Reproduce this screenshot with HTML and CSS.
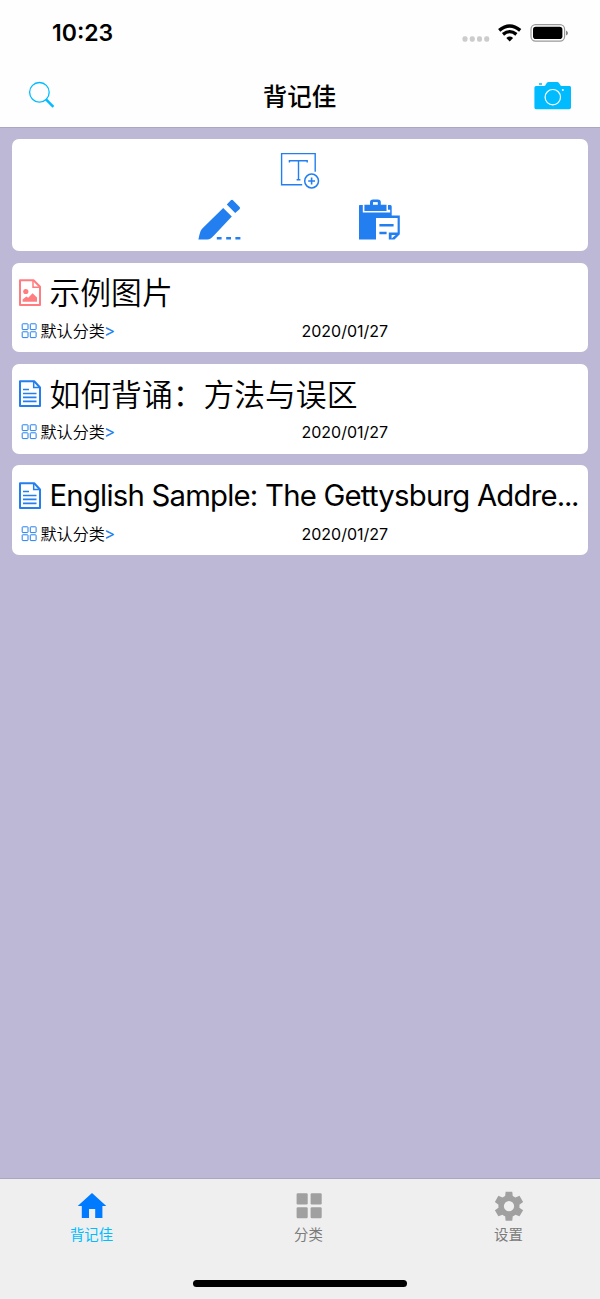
FILE: index.html
```html
<!DOCTYPE html>
<html lang="zh-CN">
<head>
<meta charset="utf-8">
<title>背记佳</title>
<link rel="stylesheet" href="styles.css">
</head>
<body>
<svg width="0" height="0" class="defs">
  <symbol id="grid" viewBox="0 0 16 16"><g fill="none" stroke="#237ff0" stroke-width="1"><rect x="1.2" y=".8" width="5.8" height="5.8" rx=".6"/><rect x="9.3" y=".8" width="5.8" height="5.8" rx=".6"/><rect x="1.2" y="8.8" width="5.8" height="5.8" rx=".6"/><rect x="9.3" y="8.8" width="5.8" height="5.8" rx=".6"/></g></symbol>
  <symbol id="doc" viewBox="0 0 24 28"><path d="M2 1.2H16.2L22 7.5V26H2Z" fill="none" stroke="#237ff0" stroke-width="2" stroke-linejoin="round"/><path d="M15.7 1.5V7.5H21.8" fill="none" stroke="#237ff0" stroke-width="1.5"/><path d="M5 9.5H11M5 13.5H18.5M5 17.4H18.5M5 21.4H18.5" stroke="#237ff0" stroke-width="1.7"/></symbol>
</svg>
<div class="app">
  <header class="header">
    <div class="status">
      <span class="time">10:23</span>
      <svg class="status-icons" width="112" height="24" viewBox="0 0 112 24">
        <g fill="#ccc"><rect x="4.5" y="15.3" width="5" height="5.5" rx="2"/><rect x="11.8" y="15.3" width="5" height="5.5" rx="2"/><rect x="19" y="15.3" width="5" height="5.5" rx="2"/><rect x="26.2" y="15.3" width="5" height="5.5" rx="2"/></g>
        <g fill="none" stroke="#000"><path d="M41.2 9.4Q51.7 .7 62.2 9.4" stroke-width="3.4"/><path d="M45 13.4Q51.7 7.9 58.4 13.4" stroke-width="3.3"/></g>
        <path d="M48.3 16.9Q51.7 14.1 55.1 16.9L51.7 20.6Z"/>
        <rect x="73" y="3.6" width="33.6" height="16.6" rx="4.6" fill="none" stroke="#999" stroke-width="1.2"/>
        <rect x="75" y="5.8" width="29.4" height="12.3" rx="2.8"/>
        <path d="M108 9.4Q112 12 108 14.6Z" fill="#888"/>
      </svg>
    </div>
    <nav class="navbar">
      <svg width="30" height="30" viewBox="0 0 30 30"><circle cx="12.4" cy="12.3" r="9.8" fill="none" stroke="#00bcff" stroke-width="1.3"/><path d="M19 19.3L26.4 26.8" stroke="#00bcff" stroke-width="2.5"/></svg>
      <h1>背记佳</h1>
      <svg width="38" height="30" viewBox="0 0 38 30"><path d="M2 6H10Q11.4 6 12.2 3.8Q13 2 14.5 2H23.3Q24.8 2 25.5 3.8Q26.4 6 27.8 6H35.7Q37 6 37 7.5V27.5Q37 29.3 35.2 29.3H2Q.4 29.3.4 27.5V7.7Q.4 6 2 6ZM5 3.2H8V4.8H5Z" fill="#00bcff"/><circle cx="18.8" cy="17.2" r="7.7" fill="none" stroke="#fff" stroke-width="1.2"/><circle cx="28.8" cy="9.9" r="1" fill="#fff"/></svg>
    </nav>
  </header>
  <main class="content">
    <section class="create card">
      <svg width="42" height="40" viewBox="0 0 42 40"><g fill="none" stroke="#237ff0" stroke-width="1.4"><path d="M23.2 33.8H2.6V2.6H36.2V20.8"/><path d="M10.4 11.6V9.7H28.2V11.6M19.5 9.7V28.5M17.6 28.8H21.4"/><circle cx="32.6" cy="30" r="6.9" stroke-width="1.5"/><path d="M29.2 30H36M32.6 26.6V33.4" stroke-width="1.6"/></g></svg>
      <div class="create-row">
        <svg width="44" height="42" viewBox="0 0 44 42"><path d="M25.2 8.1L33.8 16.6L16.2 35.2Q12.6 39.4 9.4 39.4H.4Q1.5 34 2.6 31Q3.4 29 5.3 27.4ZM28.8 4.4L32.6.6Q34 -1 35.2.4L41.6 7Q42.6 8 41.5 9.2L37.2 13Z" fill="#237ff0"/><path d="M18.8 38.2H23.6M28.2 38.2H33M37.4 38.2H42.4" stroke="#237ff0" stroke-width="2.6"/></svg>
        <svg width="42" height="42" viewBox="0 0 42 42"><path d="M0 5.4Q0 5 .6 5H3.8V12.6H31.2V9.8H29V5H31.4Q32.7 5 32.7 6.5V15.4H40.8V34.2L35.5 39.4H0Z" fill="#237ff0"/><path d="M5.4 4.8H11V2.2Q11 -.6 14 -.6H18.8Q21.8 -.6 21.8 2.2V4.8H27.5V11H5.4Z" fill="#237ff0"/><path d="M14 2.1H18.8V4.8H14Z" fill="#fff"/><path d="M17 18H38.6V32.6H29.8V40H17Z" fill="#fff"/><path d="M20.4 25.2H34.6M20.4 33H27.6" stroke="#237ff0" stroke-width="2.6"/><path d="M32.6 35H36.6L32.6 38.4Z" fill="#fff"/></svg>
      </div>
    </section>
    <article class="note card">
      <div class="title-row"><svg width="24" height="28" viewBox="0 0 24 28"><path d="M2 1.2H15.5L22 7.8V26H2Z" fill="none" stroke="#ff7d80" stroke-width="2" stroke-linejoin="round"/><path d="M15 1.5V8.2H21.8" fill="none" stroke="#ff7d80" stroke-width="1.5"/><circle cx="7.8" cy="12.5" r="2.6" fill="#ff7d80"/><path d="M4.6 22.7V20.5L8.3 17.4L10.2 18.8L14.6 14.3L19 18.6V22.7Z" fill="#ff7d80"/></svg><h2>示例图片</h2></div>
      <div class="meta"><span class="category"><svg width="16" height="16"><use href="#grid"/></svg><span>默认分类<b>&gt;</b></span></span><time>2020/01/27</time></div>
    </article>
    <article class="note card">
      <div class="title-row"><svg width="24" height="28"><use href="#doc"/></svg><h2>如何背诵：方法与误区</h2></div>
      <div class="meta"><span class="category"><svg width="16" height="16"><use href="#grid"/></svg><span>默认分类<b>&gt;</b></span></span><time>2020/01/27</time></div>
    </article>
    <article class="note card">
      <div class="title-row"><svg width="24" height="28"><use href="#doc"/></svg><h2 class="latin">English Sample: The Gettysburg Addre<span class="dots">...</span></h2></div>
      <div class="meta"><span class="category"><svg width="16" height="16"><use href="#grid"/></svg><span>默认分类<b>&gt;</b></span></span><time>2020/01/27</time></div>
    </article>
  </main>
  <footer class="footer">
    <div class="tabs">
      <div class="tab active"><svg width="30" height="30" viewBox="0 0 30 30"><path d="M15 2L29.3 15H25.4V27H18.2V18H12V27H4.8V15H.7Z" fill="#007aff"/></svg><span>背记佳</span></div>
      <div class="tab"><svg width="30" height="30" viewBox="0 0 30 30"><g fill="#a0a0a0"><rect x="2.6" y="2.3" width="11.1" height="11.1" rx="1.2"/><rect x="16.6" y="2.3" width="11.1" height="11.1" rx="1.2"/><rect x="2.6" y="16.2" width="11.1" height="11.1" rx="1.2"/><rect x="16.6" y="16.2" width="11.1" height="11.1" rx="1.2"/></g></svg><span>分类</span></div>
      <div class="tab"><svg width="30" height="30" viewBox="0 0 24 24"><path fill="#a0a0a0" d="M20.3 13.3Q20.5 12 20.3 10.9L23.3 8.8L20.4 3.8L17.1 5.2Q16.1 4.4 15 4L14.6.5H9.3L8.9 4Q7.8 4.4 6.8 5.2L3.5 3.8L.7 8.8L3.6 10.9Q3.4 12 3.6 13.3L.7 15.4L3.5 20.2L6.8 18.9Q7.8 19.7 8.9 20.1L9.3 23.7H14.6L15 20.1Q16.1 19.7 17.1 18.9L20.4 20.2L23.3 15.4ZM12 16.2A4.1 4.1 0 1 1 12 8A4.1 4.1 0 1 1 12 16.2Z"/></svg><span>设置</span></div>
    </div>
    <div class="home-indicator"></div>
  </footer>
</div>
</body>
</html>
```
FILE: styles.css
```css
* { box-sizing: border-box; }
body { margin: 0; font-family: Inter, "Noto Sans CJK SC", sans-serif; color: #000; }
svg { display: block; flex: none; overflow: visible; }
.defs { position: absolute; }
h1, h2 { margin: 0; font-weight: 400; }
.app { width: 600px; height: 1299px; display: flex; flex-direction: column; background: #bcb8d6; }
.header { height: 128px; background: #fefefe; border-bottom: 1px solid #aaa7c2; flex: none; }
.status { height: 66px; padding: 21px 30px 0 52px; display: flex; justify-content: space-between; align-items: flex-start; }
.time { font-size: 23px; line-height: 25px; font-weight: 600; }
.navbar { height: 58px; padding: 0 28px 0 27px; display: grid; grid-template-columns: 1fr auto 1fr; align-items: center; }
.navbar svg:last-child { justify-self: end; }
.navbar h1 { font-size: 24.5px; line-height: 30px; font-weight: 500; padding-top: 4px; }
.content { flex: 1; padding: 11.3px 12px 0; display: flex; flex-direction: column; gap: 11.7px; }
.card { background: #fff; border-radius: 7px; }
.create { height: 111.7px; padding-top: 11.5px; display: flex; flex-direction: column; align-items: center; gap: 9px; }
.create-row { display: flex; gap: 117px; padding-right: 2px; }
.note { height: 89.7px; padding: 9.1px 7px 0 6px; }
.title-row { height: 42px; display: flex; align-items: center; gap: 7.5px; }
.title-row h2 { font-size: 30.8px; line-height: 42px; font-weight: 350; white-space: nowrap; padding-top: 1px; }
.title-row .latin { font-size: 29.3px; font-weight: 400; letter-spacing: -0.77px; }
.dots { letter-spacing: -1.3px; }
.meta { height: 34px; padding-left: 3px; display: grid; grid-template-columns: 280.5px auto; align-items: center; font-size: 16.1px; line-height: 24px; font-weight: 350; }
.meta time { font-size: 16px; font-weight: 400; }
.category { display: flex; align-items: center; gap: 3.5px; }
.category b { font-weight: 400; font-size: 17px; line-height: 20px; color: #237ff0; margin-left: -1px; }
.footer { height: 121px; background: #efefef; border-top: 1px solid #aaa7c2; display: flex; flex-direction: column; align-items: center; justify-content: space-between; padding: 12px 0; }
.tabs { align-self: stretch; display: grid; grid-template-columns: 183px 251px 149px; }
.tab { display: flex; flex-direction: column; align-items: center; gap: 4px; color: #7b7b7b; font-size: 14.4px; line-height: 20px; }
.active { color: #00bcff; }
.home-indicator { width: 214px; height: 7px; border-radius: 4px; background: #000; }
```
